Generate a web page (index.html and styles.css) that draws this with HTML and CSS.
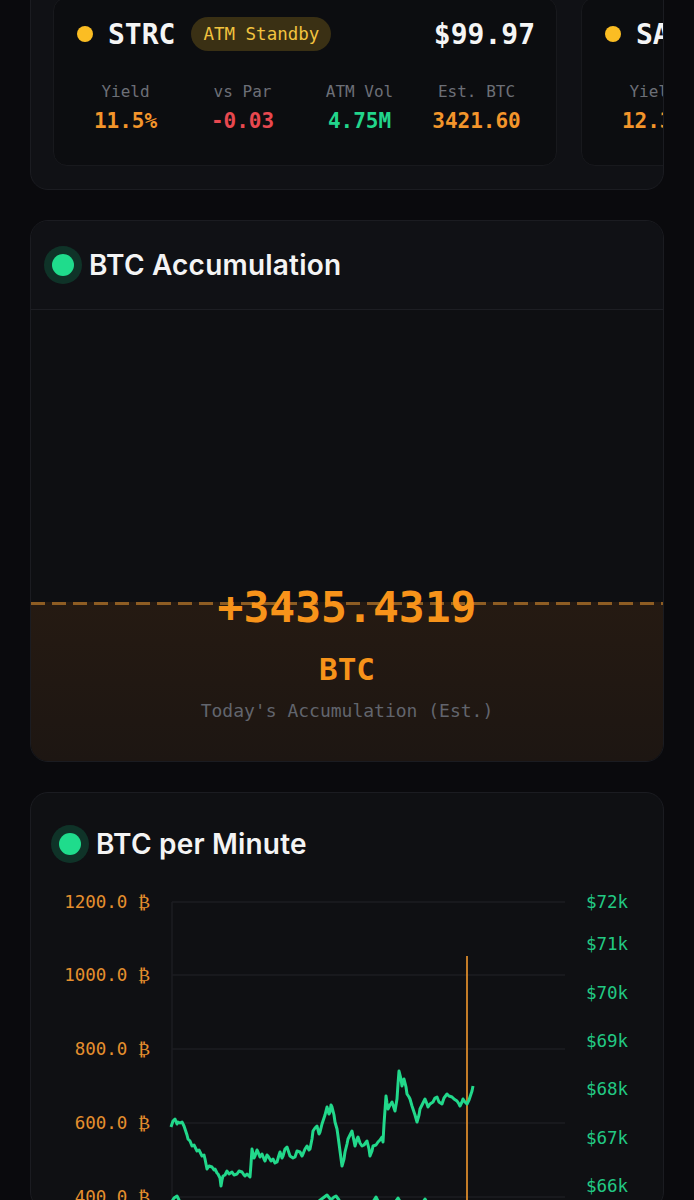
FILE: index.html
```html
<!DOCTYPE html>
<html>
<head>
    <link rel="stylesheet" href="styles.css">
</head>
<body>
    <div class="page">
        <section class="card card-tickers">
            <div class="ticker-row">
                <div class="ticker">
                    <div class="ticker-head">
                        <span class="dot dot-amber"></span>
                        <span class="ticker-name">STRC</span>
                        <span class="badge">ATM Standby</span>
                        <span class="ticker-price">$99.97</span>
                    </div>
                    <div class="metrics">
                        <div class="metric">
                            <span class="metric-label">Yield</span>
                            <span class="metric-value orange">11.5%</span>
                        </div>
                        <div class="metric">
                            <span class="metric-label">vs Par</span>
                            <span class="metric-value red">-0.03</span>
                        </div>
                        <div class="metric">
                            <span class="metric-label">ATM Vol</span>
                            <span class="metric-value green">4.75M</span>
                        </div>
                        <div class="metric">
                            <span class="metric-label">Est. BTC</span>
                            <span class="metric-value orange">3421.60</span>
                        </div>
                    </div>
                </div>
                <div class="ticker">
                    <div class="ticker-head">
                        <span class="dot dot-amber"></span>
                        <span class="ticker-name">SATA</span>
                        <span class="badge">ATM Standby</span>
                        <span class="ticker-price">$99.42</span>
                    </div>
                    <div class="metrics">
                        <div class="metric">
                            <span class="metric-label">Yield</span>
                            <span class="metric-value orange">12.3%</span>
                        </div>
                        <div class="metric">
                            <span class="metric-label">vs Par</span>
                            <span class="metric-value red">-0.58</span>
                        </div>
                        <div class="metric">
                            <span class="metric-label">ATM Vol</span>
                            <span class="metric-value green">1.12M</span>
                        </div>
                        <div class="metric">
                            <span class="metric-label">Est. BTC</span>
                            <span class="metric-value orange">13.83</span>
                        </div>
                    </div>
                </div>
            </div>
        </section>

        <section class="card card-accum">
            <div class="card-head head-accum">
                <span class="live-dot"><span></span></span>
                <h2 class="card-title">BTC Accumulation</h2>
            </div>
            <div class="accum-chart">
                <div class="accum-empty"></div>
                <div class="accum-band">
                    <div class="dash-line"></div>
                    <div class="accum-value">+3435.4319</div>
                    <div class="accum-unit">BTC</div>
                    <div class="accum-caption">Today's Accumulation (Est.)</div>
                </div>
            </div>
        </section>

        <section class="card card-minute">
            <div class="card-head head-minute">
                <span class="live-dot"><span></span></span>
                <h2 class="card-title">BTC per Minute</h2>
            </div>
            <svg class="minute-chart" width="632" height="330" viewBox="0 0 632 330">
                <g class="grid">
                    <line x1="141" y1="23" x2="534" y2="23"/>
                    <line x1="141" y1="96" x2="534" y2="96"/>
                    <line x1="141" y1="170" x2="534" y2="170"/>
                    <line x1="141" y1="244" x2="534" y2="244"/>
                    <line x1="141" y1="318" x2="534" y2="318"/>
                    <line x1="141" y1="23" x2="141" y2="330"/>
                </g>
                <g class="axis-left">
                    <text x="119" y="29">1200.0 ₿</text>
                    <text x="119" y="102">1000.0 ₿</text>
                    <text x="119" y="176">800.0 ₿</text>
                    <text x="119" y="250">600.0 ₿</text>
                    <text x="119" y="324">400.0 ₿</text>
                </g>
                <g class="axis-right">
                    <text x="555" y="29">$72k</text>
                    <text x="555" y="71">$71k</text>
                    <text x="555" y="120">$70k</text>
                    <text x="555" y="168">$69k</text>
                    <text x="555" y="216">$68k</text>
                    <text x="555" y="265">$67k</text>
                    <text x="555" y="313">$66k</text>
                </g>
                <line class="now-line" x1="436" y1="77" x2="436" y2="330"/>
                <polyline class="price-line" points="140,248 142,242 144,240 146,245 147,243 149,244 151,243 153,247 154,250 156,256 157,260 159,262 161,267 163,266 166,272 168,271 171,277 173,276 174,280 175,285 176,290 178,287 181,288 183,291 184,290 186,294 187,295 189,299 190,307 191,301 192,297 194,296 196,292 198,295 201,293 203,296 206,295 208,292 211,293 213,296 214,297 216,295 219,298 220,285 221,270 223,279 224,277 226,271 227,273 229,278 231,275 233,280 234,282 236,276 237,277 240,282 242,280 244,284 246,283 248,276 249,273 251,279 252,277 254,270 256,268 258,274 259,277 262,279 264,278 266,272 269,273 271,277 272,275 274,270 276,267 278,271 279,270 281,260 282,252 284,249 286,247 288,255 289,253 291,245 292,242 294,236 296,228 298,235 299,233 300,226 301,228 303,236 304,243 306,250 307,257 309,272 311,287 313,280 314,273 316,265 317,260 319,256 321,252 323,262 324,267 326,260 327,258 329,264 331,267 333,266 336,262 338,270 339,277 341,272 342,267 345,266 347,263 349,261 351,258 352,263 353,245 355,217 356,224 357,230 359,226 361,223 363,229 364,232 365,226 366,220 367,205 368,192 370,200 371,207 372,203 373,200 375,208 376,215 378,218 379,220 381,227 382,230 384,236 386,243 388,236 389,230 391,226 394,220 396,225 397,228 399,225 402,223 404,219 406,218 408,223 411,225 413,219 416,215 418,217 421,218 423,220 426,222 428,225 429,227 431,223 432,220 434,223 436,225 438,221 439,218 441,212 442,207"/>
                <polyline class="price-line" points="140,324 143,319 146,317 148,321 150,326 200,328 280,327 288,322 292,319 296,316 300,321 303,318 305,317 308,321 310,326 340,326 345,318 349,326 362,326 367,319 371,326 390,326 394,320 398,327"/>
            </svg>
        </section>
    </div>
</body>
</html>
```

FILE: styles.css
```css
html, body {
    margin: 0;
    padding: 0;
    background-color: #0a0a0d;
}
body {
    font-family: "DejaVu Sans Mono", "Liberation Mono", monospace;
    color: #f2f2f2;
    overflow: hidden;
}
.page {
    display: flex;
    flex-direction: column;
    gap: 30px;
    padding: 0 30px;
}
.card {
    background-color: #0f1013;
    border: 1px solid #1b1c21;
    border-radius: 18px;
    overflow: hidden;
}

/* ticker strip */
.card-tickers {
    margin-top: -26px;
    padding: 22px 0 23px 22px;
    background-color: #101115;
}
.ticker-row {
    display: flex;
    gap: 24px;
}
.ticker {
    flex: 0 0 504px;
    box-sizing: border-box;
    padding: 18px 21px 31px 23px;
    background-color: #0c0d10;
    border: 1px solid #18191d;
    border-radius: 14px;
}
.ticker-head {
    display: flex;
    align-items: center;
    height: 36px;
}
.dot {
    width: 16px;
    height: 16px;
    border-radius: 50%;
    flex: 0 0 auto;
}
.dot-amber {
    background-color: #fbbd23;
}
.ticker-name {
    margin-left: 15px;
    font-size: 28px;
    font-weight: bold;
    color: #f5f5f5;
}
.badge {
    margin-left: 16px;
    height: 34px;
    line-height: 34px;
    padding: 0 12px;
    border-radius: 17px;
    background-color: #3a3014;
    color: #f2c33f;
    font-size: 17.5px;
}
.ticker-price {
    margin-left: auto;
    font-size: 28px;
    font-weight: bold;
    color: #f5f5f5;
}
.metrics {
    display: grid;
    grid-template-columns: repeat(4, 1fr);
    margin: 30px 0 0 -10px;
}
.metric {
    display: flex;
    flex-direction: column;
    align-items: center;
    gap: 6px;
}
.metric-label {
    font-size: 16px;
    line-height: 20px;
    color: #6c6f77;
}
.metric-value {
    font-size: 21px;
    line-height: 26px;
    font-weight: bold;
}
.orange {
    color: #f3952b;
}
.red {
    color: #e8484f;
}
.green {
    color: #22d58b;
}

/* card headers */
.card-head {
    display: flex;
    align-items: center;
    gap: 7px;
}
.head-accum {
    height: 88px;
    padding-left: 13px;
    border-bottom: 1px solid #1d1e23;
    background-color: #101115;
}
.head-minute {
    height: 44px;
    padding: 29px 20px 0;
}
.live-dot {
    display: flex;
    align-items: center;
    justify-content: center;
    width: 38px;
    height: 38px;
    border-radius: 50%;
    background-color: #0f3328;
}
.live-dot span {
    width: 22px;
    height: 22px;
    border-radius: 50%;
    background-color: #1fdc8c;
}
.card-title {
    margin: 0;
    font-family: Inter, "Noto Sans", sans-serif;
    font-size: 28px;
    font-weight: 600;
    letter-spacing: 0.2px;
    color: #f4f4f4;
}

/* accumulation */
.accum-chart {
    background-color: #0e0f12;
}
.accum-empty {
    height: 292px;
}
.accum-band {
    height: 159px;
    background: linear-gradient(180deg, #251a12 0%, #1d1612 100%);
    text-align: center;
}
.dash-line {
    height: 3px;
    background: repeating-linear-gradient(90deg, #8e5d23 0 14px, transparent 14px 21px);
}
.accum-value {
    margin-top: -23px;
    font-size: 43px;
    line-height: 50px;
    font-weight: bold;
    color: #f7931a;
}
.accum-unit {
    margin-top: 19px;
    font-size: 31px;
    line-height: 36px;
    font-weight: bold;
    color: #f7931a;
}
.accum-caption {
    margin-top: 13px;
    font-size: 18px;
    line-height: 22px;
    color: #62656d;
}

/* per minute chart */
.minute-chart {
    display: block;
    margin-top: 13px;
}
.grid line {
    stroke: #1c1d22;
    stroke-width: 1.5;
}
.axis-left text {
    font-family: "DejaVu Sans Mono", monospace;
    font-size: 17.5px;
    fill: #e58f2e;
    text-anchor: end;
}
.axis-right text {
    font-family: "DejaVu Sans Mono", monospace;
    font-size: 17.5px;
    fill: #22c983;
}
.now-line {
    stroke: #d98a2b;
    stroke-width: 1.8;
}
.price-line {
    fill: none;
    stroke: #22d88b;
    stroke-width: 3;
    stroke-linejoin: round;
}
```
